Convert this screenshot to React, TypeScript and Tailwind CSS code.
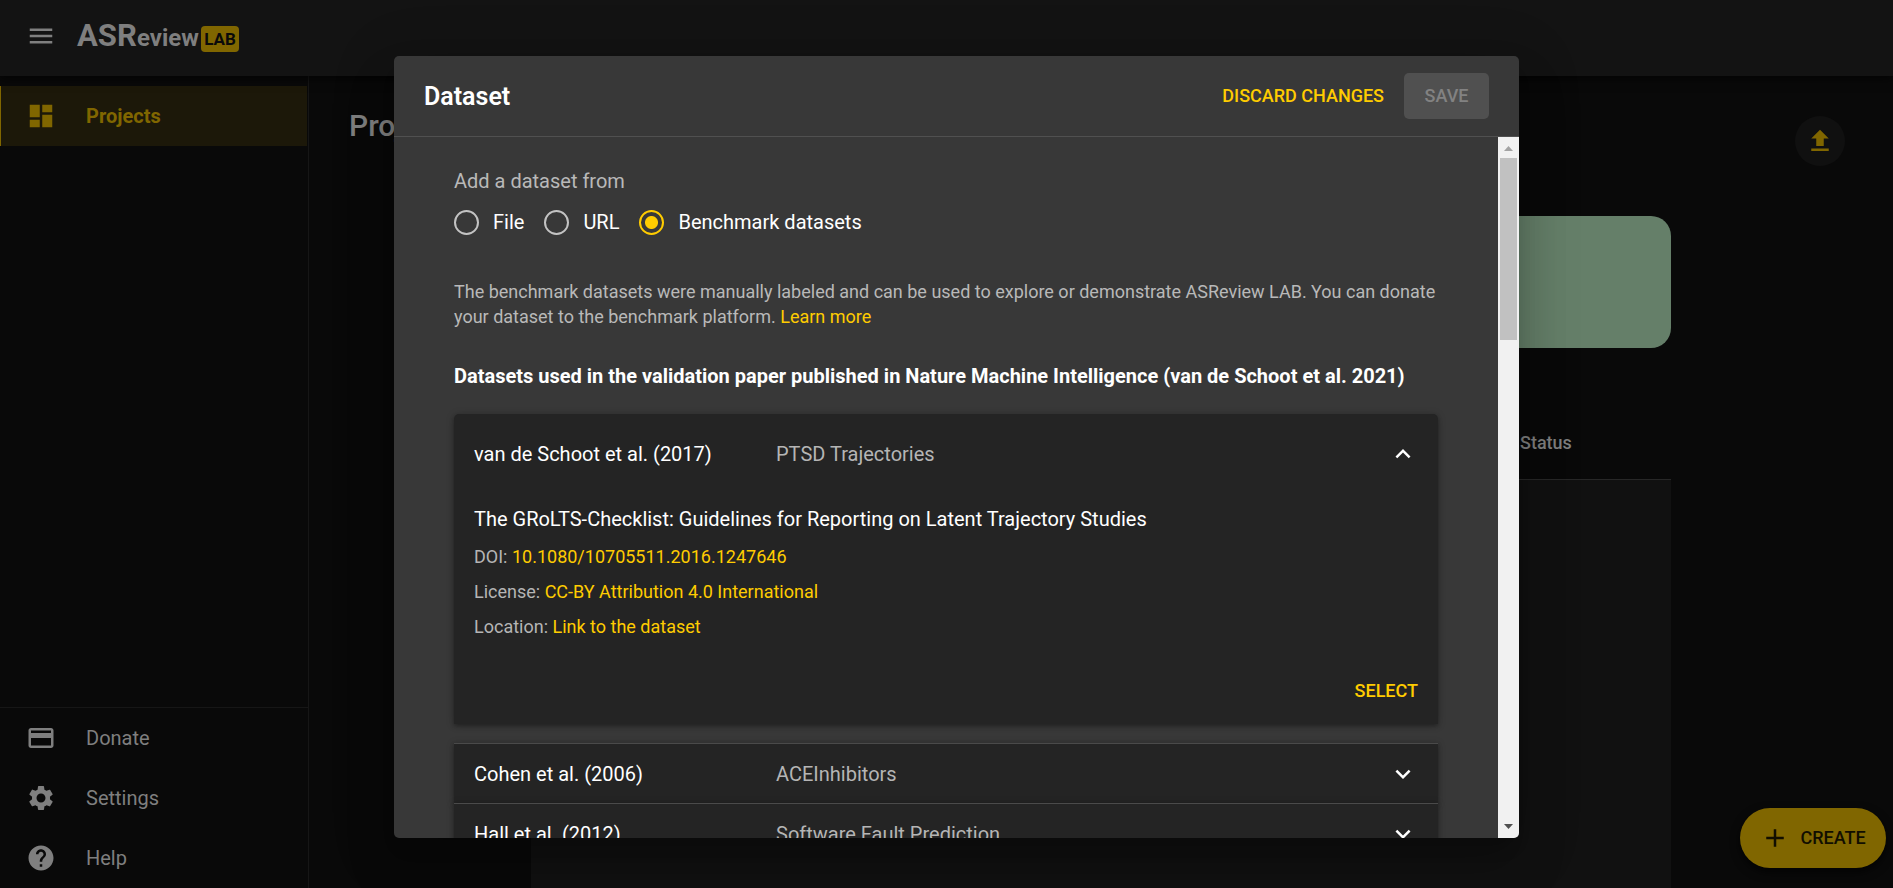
import React from "react";

const navFooter = [
  {
    label: "Donate",
    path: "M20 4H4c-1.11 0-1.99.89-1.99 2L2 18c0 1.11.89 2 2 2h16c1.11 0 2-.89 2-2V6c0-1.11-.89-2-2-2m0 14H4v-6h16zm0-10H4V6h16z",
  },
  {
    label: "Settings",
    path: "M19.14 12.94c.04-.3.06-.61.06-.94 0-.32-.02-.64-.07-.94l2.03-1.58c.18-.14.23-.41.12-.61l-1.92-3.32c-.12-.22-.37-.29-.59-.22l-2.39.96c-.5-.38-1.03-.7-1.62-.94l-.36-2.54c-.04-.24-.24-.41-.48-.41h-3.84c-.24 0-.43.17-.47.41l-.36 2.54c-.59.24-1.13.57-1.62.94l-2.39-.96c-.22-.08-.47 0-.59.22L2.74 8.87c-.12.21-.08.47.12.61l2.03 1.58c-.05.3-.09.63-.09.94s.02.64.07.94l-2.03 1.58c-.18.14-.23.41-.12.61l1.92 3.32c.12.22.37.29.59.22l2.39-.96c.5.38 1.03.7 1.62.94l.36 2.54c.05.24.24.41.48.41h3.84c.24 0 .44-.17.47-.41l.36-2.54c.59-.24 1.13-.56 1.62-.94l2.39.96c.22.08.47 0 .59-.22l1.92-3.32c.12-.22.07-.47-.12-.61zM12 15.6c-1.98 0-3.6-1.62-3.6-3.6s1.62-3.6 3.6-3.6 3.6 1.62 3.6 3.6-1.62 3.6-3.6 3.6",
  },
  {
    label: "Help",
    path: "M12 2C6.48 2 2 6.48 2 12s4.48 10 10 10 10-4.48 10-10S17.52 2 12 2m1 17h-2v-2h2zm2.07-7.75-.9.92C13.45 12.9 13 13.5 13 15h-2v-.5c0-1.1.45-2.1 1.17-2.83l1.24-1.26c.37-.36.59-.86.59-1.41 0-1.1-.9-2-2-2s-2 .9-2 2H8c0-2.21 1.79-4 4-4s4 1.79 4 4c0 .88-.36 1.68-.93 2.25",
  },
];

const sources = ["File", "URL", "Benchmark datasets"];

const details = [
  { term: "DOI:", link: "10.1080/10705511.2016.1247646" },
  { term: "License:", link: "CC-BY Attribution 4.0 International" },
  { term: "Location:", link: "Link to the dataset" },
];

const collapsed = [
  { authors: "Cohen et al. (2006)", topic: "ACEInhibitors" },
  { authors: "Hall et al. (2012)", topic: "Software Fault Prediction" },
];

function Icon({ path, className = "size-[30px]" }: { path: string; className?: string }) {
  return (
    <svg viewBox="0 0 24 24" fill="currentColor" aria-hidden="true" className={`shrink-0 ${className}`}>
      <path d={path} />
    </svg>
  );
}

function Logo() {
  return (
    <svg
      viewBox="0 0 164 32"
      className="h-8 w-[164px] overflow-visible font-['Roboto',sans-serif] font-bold"
      role="img"
      aria-label="ASReview LAB"
    >
      <g fill="currentColor">
        <text x="0" y="24" fontSize="31">ASR</text>
        <text x="60" y="24" fontSize="24">eview</text>
      </g>
      <rect x="124" y="4" width="38" height="26" rx="4" fill="#806600" />
      <text x="143" y="23" fontSize="17" textAnchor="middle" fill="#0a0a0a">LAB</text>
    </svg>
  );
}

function Summary({ authors, topic, open }: { authors: string; topic: string; open?: boolean }) {
  return (
    <button
      type="button"
      aria-expanded={!!open}
      className={`flex w-full items-center px-5 text-left text-xl ${open ? "h-20" : "h-[59px]"}`}
    >
      <span className="w-[302px] text-white">{authors}</span>
      <span className="flex-1 text-[#b5b5b5]">{topic}</span>
      <Icon
        path={
          open
            ? "m12 8-6 6 1.41 1.41L12 10.83l4.59 4.58L18 14z"
            : "M16.59 8.59 12 13.17 7.41 8.59 6 10l6 6 6-6z"
        }
      />
    </button>
  );
}

function Page() {
  return (
    <div className="flex h-full flex-col">
      <header className="z-10 flex h-[76px] shrink-0 items-center bg-[#131313] pl-[26px] text-[#7f7f7f] shadow-[0_2px_10px_rgba(0,0,0,0.7)]">
        <button type="button" aria-label="Menu" className="mr-[21px] pb-1">
          <Icon path="M3 18h18v-2H3zm0-5h18v-2H3zm0-7v2h18V6z" />
        </button>
        <Logo />
      </header>
      <div className="flex min-h-0 flex-1">
        <nav className="flex w-[309px] shrink-0 flex-col justify-between border-r border-[#161616] text-xl text-[#7f7f7f]">
          <a
            href="#projects"
            className="mr-px mt-2.5 flex h-[60px] items-center border-l border-[#806600] bg-[#1c1809] pl-[25px] font-bold text-[#806600]"
          >
            <Icon path="M3 13h8V3H3zm0 8h8v-6H3zm10 0h8V11h-8zm0-18v6h8V3z" className="mr-[30px] size-[30px]" />
            Projects
          </a>
          <div className="border-t border-[#161616]">
            {navFooter.map((item) => (
              <a key={item.label} href={`#${item.label.toLowerCase()}`} className="flex h-[60px] items-center pl-[26px]">
                <Icon path={item.path} className="mr-[30px] size-[30px]" />
                {item.label}
              </a>
            ))}
          </div>
        </nav>
        <main className="flex min-w-0 flex-1 flex-col">
          <div className="flex h-[140px] shrink-0 items-start justify-between pl-10 pr-12 pt-10">
            <h1 className="text-3xl font-medium leading-[20px] text-[#7f7f7f]">Projects</h1>
            <button
              type="button"
              aria-label="Import project"
              className="flex size-[50px] items-center justify-center rounded-full bg-[#101010] text-[#806600]"
            >
              <Icon path="M5 20h14v-2H5zm0-10h4v6h6v-6h4l-7-7z" />
            </button>
          </div>
          <div className="mx-auto flex min-h-0 w-full max-w-[1140px] flex-1 flex-col">
            <div className="h-[132px] shrink-0 rounded-[20px] bg-[#657f69]" />
            <table className="mt-[60px] w-full flex-1 table-fixed text-left text-lg">
              <thead>
                <tr className="h-[71px] border-b border-[#272727] text-[#7f7f7f]">
                  <td className="w-[989px]" />
                  <th className="font-medium">Status</th>
                </tr>
              </thead>
              <tbody className="bg-[#111111]">
                <tr className="h-[409px]">
                  <td />
                  <td />
                </tr>
              </tbody>
            </table>
          </div>
        </main>
      </div>
    </div>
  );
}

function DatasetDialog() {
  return (
    <section
      role="dialog"
      aria-labelledby="dialog-title"
      className="flex h-full w-full max-w-[1125px] flex-col overflow-hidden rounded-[5px] bg-[#383838] shadow-[0_14px_19px_-9px_rgba(0,0,0,0.2),0_30px_48px_4px_rgba(0,0,0,0.14),0_11px_58px_10px_rgba(0,0,0,0.12)]"
    >
      <header className="flex h-[81px] shrink-0 items-center border-b border-[#505050] px-[30px]">
        <h2 id="dialog-title" className="flex-1 pt-0.5 text-[25px] font-semibold text-white">
          Dataset
        </h2>
        <button type="button" className="px-5 text-lg font-medium text-[#ffcc00]">
          DISCARD CHANGES
        </button>
        <button type="button" disabled className="h-[46px] w-[85px] rounded-[5px] bg-[#505050] text-lg font-medium text-[#828282]">
          SAVE
        </button>
      </header>
      <div className="flex min-h-0 flex-1">
        <div className="min-w-0 flex-1 overflow-hidden px-[60px] pt-[29px]">
          <fieldset>
            <legend className="text-xl leading-[30px] text-[#b9b9b9]">Add a dataset from</legend>
            <div className="flex h-[52px] items-center gap-5 text-xl text-white">
              {sources.map((source, index) => (
                <label key={source} className="flex items-center gap-3.5">
                  <input
                    type="radio"
                    name="source"
                    defaultChecked={index === 2}
                    className="size-[25px] appearance-none rounded-full border-2 border-[#c3c3c3] checked:border-[#ffcc00] checked:bg-[radial-gradient(circle,#ffcc00_6px,transparent_7px)]"
                  />
                  {source}
                </label>
              ))}
            </div>
          </fieldset>
          <p className="mt-[31px] text-lg leading-[25px] text-[#b9b9b9]">
            The benchmark datasets were manually labeled and can be used to explore or demonstrate ASReview LAB. You can
            donate your dataset to the benchmark platform.{" "}
            <a href="#learn-more" className="text-[#ffcc00]">
              Learn more
            </a>
          </p>
          <h3 className="mb-[23px] mt-8 text-xl font-bold leading-[30px] text-white">
            Datasets used in the validation paper published in Nature Machine Intelligence (van de Schoot et al. 2021)
          </h3>
          <div className="text-white">
            <article className="mb-[19px] h-[310px] rounded-t-[5px] bg-[#242424] shadow-[0_2px_4px_rgba(0,0,0,0.3),0_1px_8px_rgba(0,0,0,0.2)]">
              <Summary authors="van de Schoot et al. (2017)" topic="PTSD Trajectories" open />
              <div className="px-5 pt-2.5">
                <h4 className="text-xl leading-[30px]">
                  The GRoLTS-Checklist: Guidelines for Reporting on Latent Trajectory Studies
                </h4>
                <div className="mt-2.5 text-lg leading-[25px] text-[#b5b5b5]">
                  {details.map((detail) => (
                    <p key={detail.term} className="mb-2.5">
                      {detail.term}{" "}
                      <a href="#dataset" className="text-[#ffcc00]">
                        {detail.link}
                      </a>
                    </p>
                  ))}
                </div>
                <div className="flex justify-end pt-[29px]">
                  <button type="button" className="text-lg font-medium leading-[26px] text-[#ffcc00]">
                    SELECT
                  </button>
                </div>
              </div>
            </article>
            {collapsed.map((item) => (
              <article
                key={item.authors}
                className="border-t border-[#4a4a4a] bg-[#242424] shadow-[0_2px_4px_rgba(0,0,0,0.3),0_1px_8px_rgba(0,0,0,0.2)]"
              >
                <Summary authors={item.authors} topic={item.topic} />
              </article>
            ))}
          </div>
        </div>
        <div aria-hidden="true" className="flex w-[21px] flex-col items-center justify-between bg-[#f1f1f1]">
          <div className="flex flex-col items-center">
            <svg viewBox="0 0 21 21" className="size-[21px]">
              <path d="M6 14h9l-4.5-5z" fill="#a3a3a3" />
            </svg>
            <div className="h-[182px] w-[17px] bg-[#c1c1c1]" />
          </div>
          <svg viewBox="0 0 21 21" className="size-[21px]">
            <path d="M6 7h9l-4.5 5z" fill="#505050" />
          </svg>
        </div>
      </div>
    </section>
  );
}

export default function App() {
  return (
    <div className="relative h-screen overflow-hidden bg-[#090909] font-['Roboto',sans-serif]">
      <Page />
      <button
        type="button"
        className="absolute bottom-5 right-[7px] flex h-[60px] w-[146px] items-center justify-center gap-2.5 rounded-full bg-[#806600] text-lg font-medium text-[#110e00] shadow-[0_4px_10px_rgba(0,0,0,0.7)]"
      >
        <Icon path="M19 13h-6v6h-2v-6H5v-2h6V5h2v6h6z" className="size-[30px]" />
        CREATE
      </button>
      <div className="absolute inset-0 z-20 flex justify-center pb-[50px] pl-5 pt-14">
        <DatasetDialog />
      </div>
    </div>
  );
}
